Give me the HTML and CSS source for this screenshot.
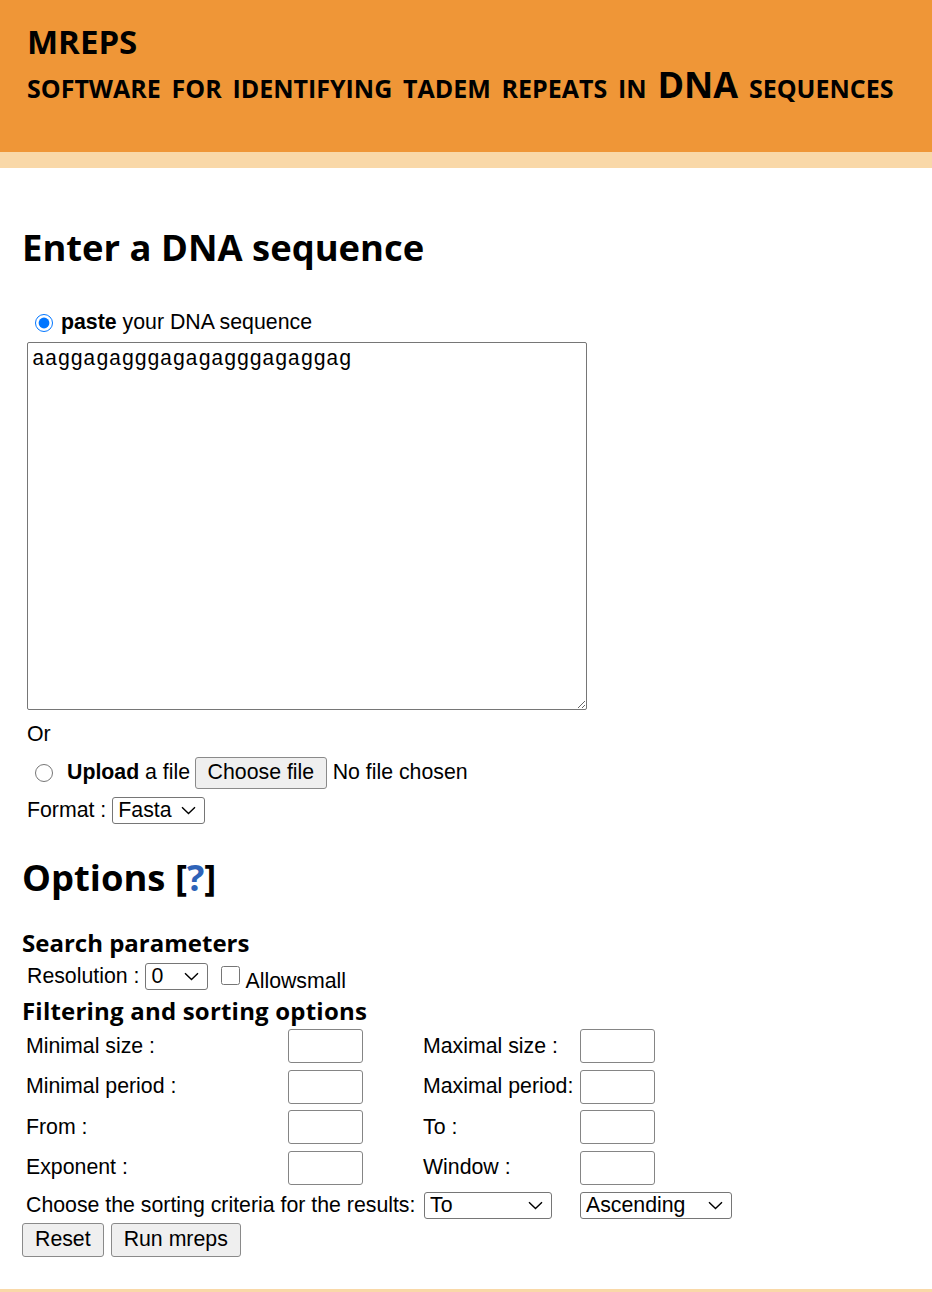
FILE: index.html
```html
<!DOCTYPE html>
<html lang="en">
<head>
<meta charset="utf-8">
<title>mreps</title>
<link rel="stylesheet" href="styles.css">
</head>
<body>
<header class="top">
  <div class="brand">MREPS</div>
  <div class="tagline">software for identifying tadem repeats in DNA sequences</div>
</header>
<div class="band"></div>
<main class="content">
  <h2 class="title">Enter a DNA sequence</h2>
  <form class="form">
    <label class="paste-row"><input type="radio" name="src" class="radio" checked><b>paste</b>&nbsp;your DNA sequence</label>
    <textarea class="seq">aaggagagggagagagggagaggag</textarea>
    <div class="or">Or</div>
    <div class="upload-row">
      <input type="radio" name="src" class="radio"><b>Upload</b>&nbsp;a file
      <label class="file-pick"><input type="file" class="file-input"><span class="file-btn">Choose file</span></label>
      <span class="file-name">No file chosen</span>
    </div>
    <div class="format-row">Format :<select class="sel sel-format"><option>Fasta</option></select></div>

    <h2 class="title options">Options [<a class="help" href="#">?</a>]</h2>

    <h3 class="sub sub-search">Search parameters</h3>
    <div class="res-row">Resolution :<select class="sel sel-res"><option>0</option></select><input type="checkbox" class="check"><span class="check-lbl">Allowsmall</span></div>

    <h3 class="sub sub-filter">Filtering and sorting options</h3>
    <div class="grid">
      <span class="lbl">Minimal size :</span><input class="num" type="text">
      <span class="lbl">Maximal size :</span><input class="num" type="text">
      <span class="lbl">Minimal period :</span><input class="num" type="text">
      <span class="lbl">Maximal period:</span><input class="num" type="text">
      <span class="lbl">From :</span><input class="num" type="text">
      <span class="lbl">To :</span><input class="num" type="text">
      <span class="lbl">Exponent :</span><input class="num" type="text">
      <span class="lbl">Window :</span><input class="num" type="text">
      <span class="lbl span2">Choose the sorting criteria for the results:</span>
      <select class="sel sel-to"><option>To</option></select>
      <select class="sel sel-order"><option>Ascending</option></select>
    </div>
    <div class="buttons">
      <button type="reset" class="btn">Reset</button>
      <button type="button" class="btn">Run mreps</button>
    </div>
  </form>
</main>
<footer class="foot"></footer>
</body>
</html>
```
FILE: styles.css
```css
html, body {
  margin: 0;
  padding: 0;
  background: #ffffff;
}
body {
  font-family: "Liberation Sans", Arial, sans-serif;
  font-size: 21.3px;
  color: #000;
}
.top {
  background: #ef9637;
  height: 152px;
  box-sizing: border-box;
  padding: 24px 0 0 27px;
}
.brand {
  font-family: "Open Sans", sans-serif;
  font-weight: 700;
  font-size: 33px;
  line-height: 36px;
}
.tagline {
  font-family: "Open Sans", sans-serif;
  font-weight: 700;
  font-size: 36px;
  line-height: 40px;
  margin-top: 5px;
  font-variant: small-caps;
  word-spacing: 1.4px;
}
.band {
  background: #f9d8a8;
  height: 16px;
}
.content {
  padding: 0 22px;
}
.title {
  font-family: "Open Sans", sans-serif;
  font-weight: 700;
  font-size: 36.4px;
  line-height: 49px;
  margin: 55px 0 0;
}
.form {
  margin: 0;
}
.paste-row {
  display: flex;
  align-items: center;
  height: 23px;
  margin-top: 39px;
  padding-left: 13px;
}
.radio {
  width: 18px;
  height: 18px;
  margin: 0 8px 0 0;
}
.seq {
  display: block;
  box-sizing: border-box;
  width: 560px;
  height: 368px;
  margin: 8px 0 0 5px;
  padding: 4px 4px;
  font-family: "Liberation Mono", "Courier New", monospace;
  font-size: 21.3px;
  line-height: 24px;
  border: 1px solid #767676;
  border-radius: 2px;
  color: #000;
}
.or {
  margin: 12px 0 0 5px;
  line-height: 24px;
}
.upload-row {
  display: flex;
  align-items: center;
  height: 33px;
  margin-top: 10px;
  padding-left: 13px;
  white-space: nowrap;
}
.upload-row .radio {
  margin-right: 14px;
}
.file-pick {
  display: inline-flex;
  margin-left: 5px;
}
.file-input {
  display: none;
}
.file-btn {
  display: inline-flex;
  align-items: center;
  box-sizing: border-box;
  height: 32px;
  padding: 0 11.5px;
  background: #efefef;
  border: 1px solid #8a8a8a;
  border-radius: 3px;
}
.file-name {
  margin-left: 6px;
}
.format-row {
  display: flex;
  align-items: center;
  height: 26px;
  margin-top: 8px;
  padding-left: 5px;
}
.sel {
  -webkit-appearance: none;
  appearance: none;
  font: inherit;
  height: 27px;
  box-sizing: border-box;
  border: 1px solid #767676;
  border-radius: 3px;
  background-color: #fff;
  background-image: url("data:image/svg+xml;utf8,<svg xmlns='http://www.w3.org/2000/svg' width='15' height='9' viewBox='0 0 15 9'><path d='M1 1.2 L7.5 7.6 L14 1.2' fill='none' stroke='black' stroke-width='1.4'/></svg>");
  background-repeat: no-repeat;
  background-position: right 8px center;
  background-size: 15px 9px;
  color: #000;
  padding: 0 5px;
  line-height: 25px;
}
.sel-format { width: 93px; margin-left: 6px; }
.sel-res { width: 63px; margin-left: 6px; }
.sel-to { width: 128px; margin-left: 1px; }
.sel-order { width: 152px; }
.options {
  margin-top: 30px;
}
.help {
  color: #2e63b8;
  text-decoration: none;
}
.sub {
  font-family: "Open Sans", sans-serif;
  font-weight: 700;
  font-size: 24px;
  line-height: 30px;
  margin: 0;
}
.sub-search {
  margin-top: 26px;
}
.sub-filter {
  margin-top: 6px;
  letter-spacing: 0.2px;
}
.res-row {
  display: flex;
  align-items: center;
  height: 27px;
  margin-top: 5px;
  padding-left: 5px;
}
.check {
  width: 19px;
  height: 19px;
  margin: 0 5px 0 13px;
  align-self: flex-start;
  margin-top: 3px;
}
.check-lbl {
  align-self: flex-end;
  line-height: 24px;
  margin-bottom: -3px;
}
.grid {
  display: grid;
  grid-template-columns: 262px 135px 157px auto;
  row-gap: 6.67px;
  align-items: center;
  padding-left: 4px;
  margin-top: 3px;
}
.span2 {
  grid-column: 1 / 3;
}
.num {
  box-sizing: border-box;
  width: 75px;
  height: 34px;
  border: 1px solid #858585;
  border-radius: 3px;
  margin: 0;
  font: inherit;
}
.grid .sel {
  justify-self: start;
}
.buttons {
  display: flex;
  gap: 7px;
  margin-top: 4px;
}
.btn {
  font: inherit;
  height: 34px;
  padding: 0 12px;
  background: #efefef;
  border: 1px solid #8a8a8a;
  border-radius: 3px;
  color: #000;
}
.foot {
  margin-top: 32px;
  height: 40px;
  background: #f9d8a8;
}
```
